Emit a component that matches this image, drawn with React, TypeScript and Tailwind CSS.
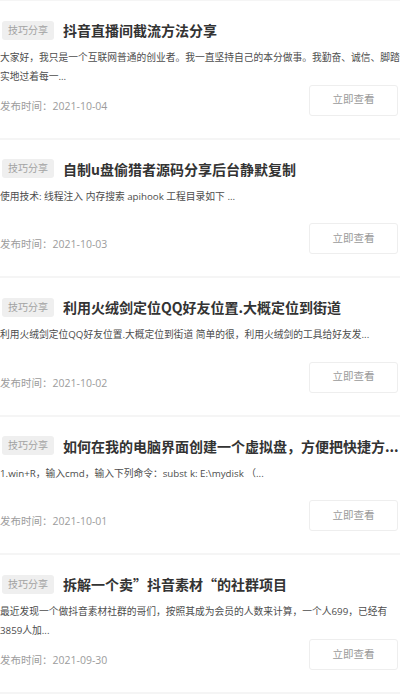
import React from "react";

interface Post {
  title: string;
  desc: string;
  date: string;
}

const posts: Post[] = [
  {
    title: "抖音直播间截流方法分享",
    desc: "大家好，我只是一个互联网普通的创业者。我一直坚持自己的本分做事。我勤奋、诚信、脚踏实地过着每一...",
    date: "2021-10-04",
  },
  {
    title: "自制u盘偷猎者源码分享后台静默复制",
    desc: "使用技术: 线程注入 内存搜索 apihook 工程目录如下 ...",
    date: "2021-10-03",
  },
  {
    title: "利用火绒剑定位QQ好友位置.大概定位到街道",
    desc: "利用火绒剑定位QQ好友位置.大概定位到街道 简单的很，利用火绒剑的工具给好友发...",
    date: "2021-10-02",
  },
  {
    title: "如何在我的电脑界面创建一个虚拟盘，方便把快捷方...",
    desc: "1.win+R，输入cmd，输入下列命令：subst k: E:\\mydisk （...",
    date: "2021-10-01",
  },
  {
    title: "拆解一个卖”抖音素材“的社群项目",
    desc: "最近发现一个做抖音素材社群的哥们，按照其成为会员的人数来计算，一个人699，已经有3859人加...",
    date: "2021-09-30",
  },
];

function PostCard({ post }: { post: Post }) {
  return (
    <div className="h-[138.6px] box-border border-b-2 border-[#f5f5f5] pt-[20px] pb-[22px] flex flex-col">
      {/* 标签 + 标题 */}
      <div className="flex items-center h-[18px]">
        <span className="ml-[2px] shrink-0 h-[19px] px-[6px] rounded-[3px] bg-[#efefef] text-[#a3a3a3] text-[10px] leading-[19px]">
          技巧分享
        </span>
        <h2 className="ml-[9px] min-w-0 text-[14px] leading-[20px] font-bold text-[#333333] truncate font-['Noto_Sans_CJK_SC',sans-serif]">
          {post.title}
        </h2>
      </div>
      <p className="mt-[9px] text-[9.75px] leading-[19px] text-[#4d4d4d] line-clamp-2">
        {post.desc}
      </p>
      <div className="mt-auto flex items-end justify-between">
        <span className="text-[10.5px] leading-[19px] text-[#9c9c9c]">
          发布时间：{post.date}
        </span>
        <button className="mr-[2px] w-[89px] h-[31px] rounded-[3px] border border-[#eeeeee] bg-white text-[10.5px] text-[#9a9a9a]">
          立即查看
        </button>
      </div>
    </div>
  );
}

export default function App() {
  return (
    <div className="w-[400px] h-[700px] overflow-hidden bg-white border-t border-[#f5f5f5] font-['Open_Sans','Noto_Sans_CJK_SC',sans-serif]">
      {posts.map((post, index) => (
        <PostCard key={index} post={post} />
      ))}
    </div>
  );
}
